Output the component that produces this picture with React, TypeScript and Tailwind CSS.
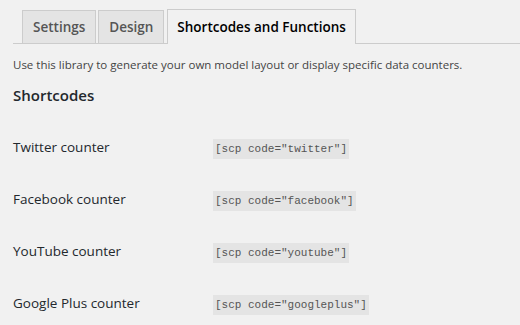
const rows = [
  { label: 'Twitter counter', code: '[scp code="twitter"]' },
  { label: 'Facebook counter', code: '[scp code="facebook"]' },
  { label: 'YouTube counter', code: '[scp code="youtube"]' },
  { label: 'Google Plus counter', code: '[scp code="googleplus"]' },
];

function Tab({ label, active }: { label: string; active?: boolean }) {
  if (active) {
    return (
      <div className="-mb-px ml-[1px] h-[35px] border border-b-0 border-[#ccc] bg-[#f1f1f1] px-[9px] flex items-center text-[13.5px] font-semibold text-[#000]">
        {label}
      </div>
    );
  }
  return (
    <div className="h-[33px] border border-b-0 border-[#ccc] bg-[#e4e4e4] px-[10px] flex items-center text-[13.5px] font-semibold text-[#555]">
      {label}
    </div>
  );
}

export default function App() {
  return (
    <div
      className="w-[520px] h-[325px] overflow-hidden bg-[#f1f1f1] pl-[13px]"
      style={{ fontFamily: '"Open Sans", sans-serif' }}
    >
      {/* Tabs */}
      <div className="mt-[9px] flex items-end gap-[2px] border-b border-[#ccc] pl-[9px]">
        <Tab label="Settings" />
        <Tab label="Design" />
        <Tab label="Shortcodes and Functions" active />
      </div>

      <p className="mt-[12px] text-[11.5px] text-[#444]">
        Use this library to generate your own model layout or display specific data counters.
      </p>

      <h2 className="mt-[11px] text-[15px] font-semibold text-[#23282d]">Shortcodes</h2>

      <div className="mt-[16px] flex flex-col">
        {rows.map((r) => (
          <div key={r.label} className="flex items-center h-[52px]">
            <div className="w-[200px] text-[13.5px] text-[#23282d] -mt-[4px]">{r.label}</div>
            <code
              className="bg-[#e4e4e4] px-[2px] py-[2px] text-[11px] text-[#555]"
              style={{ fontFamily: '"Liberation Mono", monospace' }}
            >
              {r.code}
            </code>
          </div>
        ))}
      </div>
    </div>
  );
}
